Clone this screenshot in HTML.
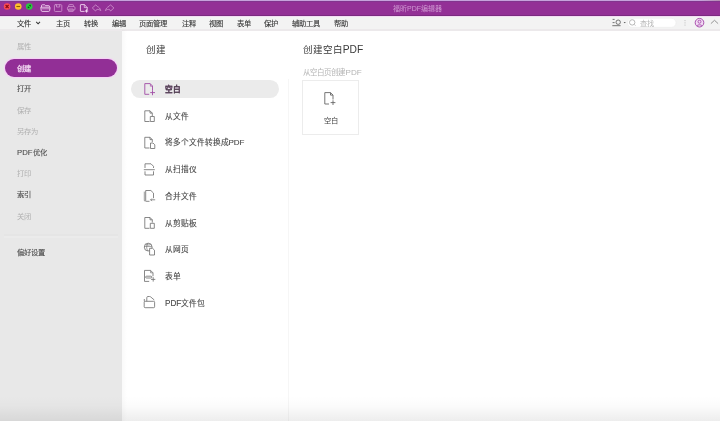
<!DOCTYPE html>
<html lang="zh-CN">
<head>
<meta charset="utf-8">
<style>
*{margin:0;padding:0;box-sizing:border-box}
html,body{width:720px;height:421px;overflow:hidden;background:#fff;font-family:"Liberation Sans",sans-serif}
.abs{position:absolute}
#title{left:0;top:0;width:720px;height:16px;background:#933096}
#ttop{left:0;top:0;width:720px;height:1px;background:linear-gradient(90deg,#c6a2dc 0,#c6a2dc 700px,#b48cb0 720px)}
#ttop2{left:0;top:1px;width:720px;height:1px;background:#82358e}
#tline{left:0;top:15px;width:720px;height:1px;background:#7b2a80}
#tline2{left:0;top:16px;width:720px;height:1px;background:#f3dcf3}
#menu{left:0;top:16px;width:720px;height:14px;background:#f3f3f3}
#side{left:0;top:30px;width:122px;height:391px;background:#e8e8e8}
#vline{left:287.5px;top:79px;width:1px;height:342px;background:#f6f6f6}
.t{position:absolute;white-space:nowrap;line-height:1;will-change:transform}
.m{font-size:7.3px;color:#333;top:19.5px;-webkit-text-stroke:0.1px #333}
.s{font-size:7.3px;color:#b0b0b0;left:17px}
.s.d{color:#4c4c4c;-webkit-text-stroke:0.1px #4c4c4c}
.it{font-size:7.7px;color:#484848;left:165px;-webkit-text-stroke:0.12px #484848}
svg{position:absolute;overflow:visible}
</style>
</head>
<body>
<div id="title" class="abs"></div>
<div id="tline" class="abs"></div>
<div id="ttop" class="abs"></div>
<div id="ttop2" class="abs"></div>
<div id="menu" class="abs"></div>
<div id="tline2" class="abs"></div>
<div id="side" class="abs"></div>
<div id="vline" class="abs"></div>
<div class="abs" style="left:0;top:29px;width:720px;height:1.5px;background:#ece9eb"></div>
<div class="abs" style="left:122px;top:30px;width:5px;height:391px;background:linear-gradient(90deg,rgba(0,0,0,0.025),rgba(0,0,0,0))"></div>
<div class="abs" style="left:0;top:396px;width:720px;height:25px;background:linear-gradient(rgba(0,0,0,0),rgba(0,0,0,0.015) 40%,rgba(0,0,0,0.07))"></div>

<!-- traffic lights -->
<svg style="left:0;top:0" width="40" height="14">
<circle cx="7.1" cy="6.5" r="3.3" fill="#fd4b55"/>
<path d="M5.6 5 L8.6 8 M8.6 5 L5.6 8" stroke="#8a0a10" stroke-width="1.1"/>
<circle cx="18.25" cy="6.5" r="3.3" fill="#fdbf2f"/>
<path d="M16.4 6.5 H20.1" stroke="#8f5a00" stroke-width="1.1"/>
<circle cx="29.25" cy="6.5" r="3.3" fill="#29c840"/>
<path d="M27.6 8.2 L27.9 5.9 L29.9 8 Z M30.9 4.8 L30.6 7.1 L28.6 5 Z" fill="#0a5a10"/>
</svg>
<!-- title icons -->
<svg style="left:0;top:0" width="120" height="16" fill="none" stroke-width="0.9" stroke-linejoin="round" stroke-linecap="round">
<path d="M41.5 6.8 V5.6 Q41.5 4.8 42.3 4.8 H44.8 L45.6 5.7 H48.8 Q49.5 5.7 49.5 6.5 V6.8" stroke="#f2d6f2"/>
<path d="M41.2 7.2 H49.8 Q50.2 7.2 50.1 7.8 L49.6 10.6 Q49.5 11.4 48.7 11.4 H42.1 Q41.3 11.4 41.2 10.6 Z" stroke="#f2d6f2"/>
<path d="M42 8.8 H49.4" stroke="#f2d6f2" stroke-width="0.7"/>
<rect x="54.4" y="4.7" width="7.4" height="6.8" rx="0.9" stroke="#c98cca"/>
<path d="M56.5 4.8 V7 H59.7 V4.8" stroke="#c98cca"/>
<path d="M68.8 6.5 V5.2 Q68.8 4.6 69.4 4.6 H72.8 Q73.4 4.6 73.4 5.2 V6.5" stroke="#c98cca"/>
<rect x="67.4" y="6.6" width="7.6" height="3.6" rx="1.2" stroke="#c98cca"/>
<path d="M69 9 H73.2 V11.4 H69 Z" stroke="#c98cca"/>
<path d="M84.2 11.4 H80.8 Q80.4 11.4 80.4 11 V5 Q80.4 4.6 80.8 4.6 H84.4 L87.2 7.6 V9.6" stroke="#f2d6f2"/>
<path d="M84.3 4.7 V7.6 H87.1" stroke="#f2d6f2" stroke-width="0.7"/>
<path d="M86.6 9.8 V12.2 M85.4 11 H87.8" stroke="#f8e0f8" stroke-width="1"/>
<path d="M92.6 7.7 L95.8 4.8 L97.2 6.4 C98.9 7.1 100.3 8.6 100.8 10.6 C99.4 9.5 98 9.3 96.8 9.4 L95.8 10.7 Z" stroke="#c98cca"/>
<path d="M113.6 7.7 L110.4 4.8 L109 6.4 C107.3 7.1 105.9 8.6 105.4 10.6 C106.8 9.5 108.2 9.3 109.4 9.4 L110.4 10.7 Z" stroke="#c98cca"/>
</svg>
<div class="t" style="left:393px;top:5px;font-size:7px;color:#cf98d2">福昕PDF编辑器</div>

<!-- menu -->
<div class="t m" style="left:17.2px">文件</div>
<svg style="left:0;top:16px" width="50" height="14"><path d="M36.2 5.9 L38.1 7.8 L40 5.9" stroke="#3a3a3a" stroke-width="1.1" fill="none"/></svg>
<div class="t m" style="left:56.2px">主页</div>
<div class="t m" style="left:83.7px">转换</div>
<div class="t m" style="left:111.7px">编辑</div>
<div class="t m" style="left:139.2px">页面管理</div>
<div class="t m" style="left:181.7px">注释</div>
<div class="t m" style="left:209.2px">视图</div>
<div class="t m" style="left:236.7px">表单</div>
<div class="t m" style="left:264.2px">保护</div>
<div class="t m" style="left:292.2px">辅助工具</div>
<div class="t m" style="left:334.2px">帮助</div>

<!-- right toolbar -->
<svg style="left:0;top:0" width="720" height="30" fill="none" stroke-width="0.9">
<path d="M612.6 19.4 H614.6 M612.6 22.6 H614.6 M612.3 25.7 H620.6" stroke="#666"/>
<circle cx="618.2" cy="22.2" r="2.2" stroke="#666"/>
<path d="M623.6 22 H625.8 L624.7 23.3 Z" fill="#555" stroke="none"/>
<rect x="627.5" y="18.3" width="48.5" height="9" rx="4.5" fill="#fff" stroke="#ebebeb" stroke-width="0.6"/>
<circle cx="632.2" cy="22.4" r="2.7" stroke="#a8a8a8" stroke-width="0.8"/>
<path d="M634.2 24.4 L635.4 25.6" stroke="#a8a8a8" stroke-width="0.8"/>
<path d="M685 20.3 V21.1 M685 22.5 V23.3 M685 24.7 V25.5" stroke="#b0b0b0" stroke-width="1"/>
<circle cx="699.5" cy="22.7" r="4.3" fill="#f2dcf3" stroke="#a040a6" stroke-width="0.9"/>
<circle cx="699.5" cy="21.7" r="1.5" stroke="#a040a6" stroke-width="0.8"/>
<path d="M696.9 25.9 C697.5 24.4 701.5 24.4 702.1 25.9" stroke="#a040a6" stroke-width="0.8"/>
<path d="M710.9 23.6 L714.5 20.3 L718.1 23.6" stroke="#8a8a8a" stroke-width="0.9"/>
</svg>
<div class="t" style="left:640px;top:19.5px;font-size:7.2px;color:#b4b4b4">查找</div>

<!-- sidebar -->
<div class="t s" style="top:43px">属性</div>
<div class="abs" style="left:4.5px;top:58.5px;width:112.5px;height:18.5px;border-radius:9.25px;background:#922f96;box-shadow:0 0 0 1.2px #f6d2f6"></div>
<div class="t s" style="top:64.5px;color:#f3dcf3;-webkit-text-stroke:0.25px #f3dcf3">创建</div>
<div class="t s d" style="top:85px">打开</div>
<div class="t s" style="top:106.5px">保存</div>
<div class="t s" style="top:128px">另存为</div>
<div class="t s d" style="top:148.5px"><span style="font-size:1.06em">PDF</span><span style="margin-left:0.3px">优化</span></div>
<div class="t s" style="top:169.5px">打印</div>
<div class="t s d" style="top:191px">索引</div>
<div class="t s" style="top:212.5px">关闭</div>
<div class="abs" style="left:4px;top:234px;width:114px;height:1.5px;background:#e5e5e5"></div><div class="abs" style="left:4px;top:235.5px;width:114px;height:2px;background:#ebebeb"></div>
<div class="t s d" style="top:249px">偏好设置</div>

<!-- middle -->
<div class="t" style="left:146px;top:45px;font-size:9.5px;color:#3a3a3a">创建</div>
<div class="abs" style="left:130.5px;top:80.4px;width:148.3px;height:17.8px;border-radius:8.9px;background:#ebebeb"></div>
<div class="t it" style="top:86.3px;color:#8a3390;font-weight:bold">空白</div>
<div class="t it" style="top:113px">从文件</div>
<div class="t it" style="top:139px">将多个文件转换成<span style="font-size:1.04em;margin-left:-0.6px">PDF</span></div>
<div class="t it" style="top:166px">从扫描仪</div>
<div class="t it" style="top:193px">合并文件</div>
<div class="t it" style="top:219.5px">从剪贴板</div>
<div class="t it" style="top:246px">从网页</div>
<div class="t it" style="top:273px">表单</div>
<div class="t it" style="top:299.5px"><span style="font-size:1.06em">PDF</span>文件包</div>

<svg style="left:0;top:0" width="170" height="320" fill="none" stroke-width="0.9" stroke-linejoin="round">
<!-- blank -->
<g stroke="#a04ca5">
<path d="M149.2 94.3 H144.8 V83.6 H150.2 L152.5 86 V90.3"/>
<path d="M150.4 83.8 V86.2 H152.4" stroke-width="0.7"/>
<path d="M152.5 90.3 V95.2 M150.2 92.6 H155"/>
</g>
<g stroke="#727272" stroke-width="0.85">
<!-- from file -->
<path d="M149.5 121.5 H144.8 V110.8 H150 L152.3 113.1 V116"/>
<path d="M150 110.8 V113.1 H152.3"/>
<rect x="150.3" y="116.5" width="4" height="5"/>
<!-- multiple -->
<path d="M149.5 148 H144.8 V137.3 H150 L152.3 139.6 V142"/>
<path d="M150 137.3 V139.6 H152.3"/>
<path d="M150.5 143 H153 L154.8 144.8 V148.5 H150.5 Z"/>
<!-- scanner -->
<path d="M145 168 V163.8 H151 L153.5 166.3 V168"/>
<path d="M143.8 169.7 H154.8"/>
<path d="M145 171.3 V175 H153.5 V171.3"/>
<!-- merge -->
<path d="M149.5 201.3 H146.2 Q145.7 201.3 145.7 200.8 V190.5 H150.9 L153.5 193.1 V198.2"/>
<path d="M144.3 191.6 V200.2 Q144.3 201.3 145.4 201.3" stroke-width="0.7"/>
<path d="M150.6 199.8 H155.2 M151.9 198.5 L150.6 199.8 L151.9 201.1" stroke-width="0.8"/>
<!-- clipboard -->
<path d="M149.5 228.3 H144.8 V217.5 H150 L152.3 219.8 V222.6"/>
<path d="M150 217.5 V219.8 H152.3"/>
<rect x="150.3" y="223.3" width="4" height="5"/>
<!-- web -->
<circle cx="148.2" cy="247.1" r="3.9"/>
<path d="M148.2 243.2 C146.2 245 146.2 249.2 148.2 251 M144.5 246.4 H151.8 M145.6 244.3 C147 245.2 149.4 245.2 150.8 244.3" stroke-width="0.7"/>
<path d="M149.6 248.3 H152.6 L154.5 250.2 V255 H149.6 Z" fill="#fff"/>
<!-- form -->
<path d="M149.2 281.4 H144.5 V270.4 H150.6 L153 272.8 V276.2"/>
<path d="M150.6 270.5 V272.8 H152.9" stroke-width="0.7"/>
<rect x="145.6" y="276.2" width="6.2" height="1.8" rx="0.9"/>
<path d="M153.2 277.2 V281.6 M151 279.4 H155.3"/>
<!-- portfolio -->
<path d="M144.3 301.3 V299"/>
<path d="M146.8 301.3 V297.6 Q146.9 296.5 148 296.5 H149.5 Q150.3 296.5 150.9 297.1 L154.3 300"/>
<rect x="144.2" y="301.3" width="10.4" height="6.4" rx="0.9"/>
</g>
</svg>

<!-- right -->
<div class="t" style="left:303px;top:45px;font-size:9.5px;color:#3a3a3a">创建空白<span style="margin-left:-0.3px;font-size:1.08em">PDF</span></div>
<div class="t" style="left:302.5px;top:68.5px;font-size:7.5px;color:#b4b4b4">从空白页创建<span style="margin-left:0.6px;font-size:1.08em">PDF</span></div>
<div class="abs" style="left:302px;top:80.3px;width:56.5px;height:55.2px;border:0.8px solid #ececec"></div>
<svg style="left:0;top:0" width="360" height="140" fill="none" stroke-width="0.9" stroke-linejoin="round">
<g stroke="#666">
<path d="M329 104 H324.8 V92.6 H330.5 L333 95.1 V99.5"/>
<path d="M330.5 92.6 V95.1 H333"/>
<path d="M333 100.3 V105 M330.6 102.6 H335.4"/>
</g>
</svg>
<div class="t" style="left:323.5px;top:117px;font-size:7.3px;color:#444">空白</div>
</body>
</html>
